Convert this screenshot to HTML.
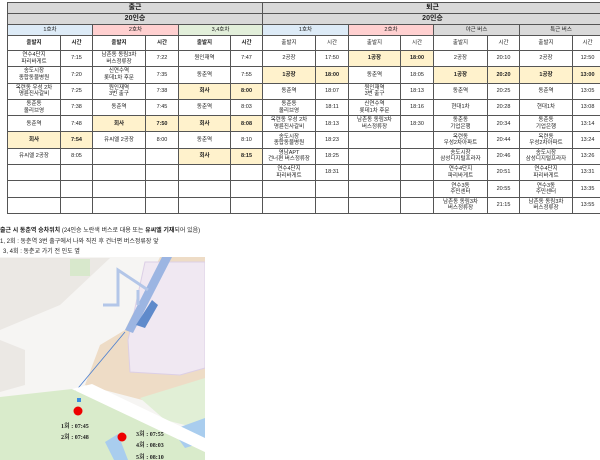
<!DOCTYPE html>
<html><head><meta charset="utf-8">
<style>
*{margin:0;padding:0;box-sizing:border-box}
body{width:600px;height:460px;background:#fff;position:relative;overflow:hidden;font-family:"Liberation Sans","Noto Sans CJK KR",sans-serif;color:#222}
table{position:absolute;border-collapse:collapse;table-layout:fixed;font-size:5.5px;line-height:6.5px}
td{border:1px solid #555;text-align:center;vertical-align:middle;overflow:hidden;white-space:nowrap;padding:0}
.g{background:#d9d9d9;font-weight:bold;font-size:7px}
.b{background:#ddebf7}.p{background:#ffd0d0}.gr{background:#e2efda}.gy{background:#d9d9d9}
.y{background:#fff2cc;font-weight:bold}
.h td{font-weight:bold}
.t{position:absolute;left:0;font-size:6px;line-height:7px;white-space:nowrap}
</style></head><body>
<table style="left:7px;top:2px;width:255px">
<colgroup><col style="width:53px"><col style="width:32px"><col style="width:53px"><col style="width:33px"><col style="width:52px"><col style="width:32px"></colgroup>
<tr style="height:11px"><td colspan="6" class="g">출근</td></tr>
<tr style="height:11px"><td colspan="6" class="g">20인승</td></tr>
<tr style="height:11px"><td colspan="2" class="b">1호차</td><td colspan="2" class="p">2호차</td><td colspan="2" class="gr">3,4호차</td></tr>
<tr class="h" style="height:15px"><td>출발지</td><td>시간</td><td>출발지</td><td>시간</td><td>출발지</td><td>시간</td></tr>
<tr style="height:16.3px"><td>연수4단지<br>파리바게트</td><td>7:15</td><td>남촌동 동림3차<br>버스정류장</td><td>7:22</td><td>원인재역</td><td>7:47</td></tr>
<tr style="height:16.3px"><td>송도시장<br>종합동물병원</td><td>7:20</td><td>신연수역<br>롯데1차 후문</td><td>7:35</td><td>동춘역</td><td>7:55</td></tr>
<tr style="height:16.3px"><td>옥련동 우성 2차<br>명륜진사갈비</td><td>7:25</td><td>원인재역<br>3번 출구</td><td>7:38</td><td class="y">회사</td><td class="y">8:00</td></tr>
<tr style="height:16.3px"><td>동춘동<br>올리브영</td><td>7:38</td><td>동춘역</td><td>7:45</td><td>동춘역</td><td>8:03</td></tr>
<tr style="height:16.3px"><td>동춘역</td><td>7:48</td><td class="y">회사</td><td class="y">7:50</td><td class="y">회사</td><td class="y">8:08</td></tr>
<tr style="height:16.3px"><td class="y">회사</td><td class="y">7:54</td><td>유씨엘 2공장</td><td>8:00</td><td>동춘역</td><td>8:10</td></tr>
<tr style="height:16.3px"><td>유씨엘 2공장</td><td>8:05</td><td></td><td></td><td class="y">회사</td><td class="y">8:15</td></tr>
<tr style="height:16.3px"><td></td><td></td><td></td><td></td><td></td><td></td></tr>
<tr style="height:16.3px"><td></td><td></td><td></td><td></td><td></td><td></td></tr>
<tr style="height:16.3px"><td></td><td></td><td></td><td></td><td></td><td></td></tr>
</table>
<table style="left:262px;top:2px;width:340px">
<colgroup><col style="width:53px"><col style="width:33px"><col style="width:52px"><col style="width:33px"><col style="width:54px"><col style="width:32px"><col style="width:53px"><col style="width:30px"></colgroup>
<tr style="height:11px"><td colspan="8" class="g">퇴근</td></tr>
<tr style="height:11px"><td colspan="8" class="g">20인승</td></tr>
<tr style="height:11px"><td colspan="2" class="b">1호차</td><td colspan="2" class="p">2호차</td><td colspan="2" class="gy">야근 버스</td><td colspan="2" class="gy">특근 버스</td></tr>
<tr style="height:15px"><td>출발지</td><td>시간</td><td>출발지</td><td>시간</td><td>출발지</td><td>시간</td><td>출발지</td><td>시간</td></tr>
<tr style="height:16.3px"><td>2공장</td><td>17:50</td><td class="y">1공장</td><td class="y">18:00</td><td>2공장</td><td>20:10</td><td>2공장</td><td>12:50</td></tr>
<tr style="height:16.3px"><td class="y">1공장</td><td class="y">18:00</td><td>동춘역</td><td>18:05</td><td class="y">1공장</td><td class="y">20:20</td><td class="y">1공장</td><td class="y">13:00</td></tr>
<tr style="height:16.3px"><td>동춘역</td><td>18:07</td><td>원인재역<br>3번 출구</td><td>18:13</td><td>동춘역</td><td>20:25</td><td>동춘역</td><td>13:05</td></tr>
<tr style="height:16.3px"><td>동춘동<br>올리브영</td><td>18:11</td><td>신연수역<br>롯데1차 후문</td><td>18:16</td><td>현대1차</td><td>20:28</td><td>현대1차</td><td>13:08</td></tr>
<tr style="height:16.3px"><td>옥련동 우성 2차<br>명륜진사갈비</td><td>18:13</td><td>남촌동 동림3차<br>버스정류장</td><td>18:30</td><td>동춘동<br>기업은행</td><td>20:34</td><td>동춘동<br>기업은행</td><td>13:14</td></tr>
<tr style="height:16.3px"><td>송도시장<br>종합동물병원</td><td>18:23</td><td></td><td></td><td>옥련동<br>우성2차아파트</td><td>20:44</td><td>옥련동<br>우성2차아파트</td><td>13:24</td></tr>
<tr style="height:16.3px"><td>영남APT<br>건너편 버스정류장</td><td>18:25</td><td></td><td></td><td>송도시장<br>삼성디지털프라자</td><td>20:46</td><td>송도시장<br>삼성디지털프라자</td><td>13:26</td></tr>
<tr style="height:16.3px"><td>연수4단지<br>파리바게트</td><td>18:31</td><td></td><td></td><td>연수4단지<br>파리바게트</td><td>20:51</td><td>연수4단지<br>파리바게트</td><td>13:31</td></tr>
<tr style="height:16.3px"><td></td><td></td><td></td><td></td><td>연수3동<br>주민센터</td><td>20:55</td><td>연수3동<br>주민센터</td><td>13:35</td></tr>
<tr style="height:16.3px"><td></td><td></td><td></td><td></td><td>남촌동 동림3차<br>버스정류장</td><td>21:15</td><td>남촌동 동림3차<br>버스정류장</td><td>13:55</td></tr>
</table>
<div class="t" style="top:228px"><b>출근 시 동춘역 승차위치</b> (24인승 노란색 버스로 대용 또는 <b>유씨엘 기재</b>되어 있음)</div>
<div class="t" style="top:239px">1, 2회 : 동춘역 3번 출구에서 나와 직진 후 건너편 버스정류장 앞</div>
<div class="t" style="top:249px;left:3px">3, 4회 : 동춘교 가기 전 인도 옆</div>
<svg style="position:absolute;left:0;top:257px" width="205" height="203" viewBox="0 257 205 203">
<rect x="0" y="257" width="205" height="203" fill="#f6f5f3"/>
<polygon points="0,258 110,258 60,305 0,330" fill="#ebe8e4"/>
<rect x="70" y="259" width="20" height="17" fill="#d8e8cc"/>
<polygon points="0,340 25,350 25,385 0,392" fill="#ebe8e4"/>
<polygon points="160,257 205,257 205,405 150,402 85,385 100,345 125,330" fill="#eedcc6"/>
<polygon points="145,262 205,262 205,368 180,375 130,372 128,340" fill="#f0e8f2" stroke="#dccfe6" stroke-width="1"/>
<polygon points="172,257 162,257 125,330 133,333" fill="#9cb5e2"/>
<polygon points="152,300 136,325 145,328 158,305" fill="#5f8acb"/>
<path d="M103,305 L118,305 L118,270 L148,290" stroke="#b3c6e8" stroke-width="3" fill="none"/>
<path d="M138,290 L138,305" stroke="#b3c6e8" stroke-width="3" fill="none"/>
<line x1="125" y1="332" x2="18" y2="460" stroke="#4a7fd0" stroke-width="0.8"/>
<polygon points="0,397 72,389 205,452 205,460 0,460" fill="#d9ebcb"/>
<polygon points="140,398 205,378 205,430 165,420" fill="#e1efd6"/>
<polygon points="172,430 205,418 205,442 185,448" fill="#a9cdee"/>
<polygon points="105,442 118,434 128,460 114,460" fill="#a9cdee"/>
<polygon points="72,389 92,384 205,438 205,452" fill="#fff"/>
<circle cx="78" cy="411" r="4.5" fill="#e00"/>
<circle cx="122" cy="437" r="4.5" fill="#e00"/>
<rect x="77" y="398" width="4" height="4" fill="#3a8be0"/>
<g font-family="Liberation Serif,Noto Serif CJK SC,serif" font-size="6" font-weight="bold" fill="#222">
<text x="61" y="428">1회 : 07:45</text>
<text x="61" y="439">2회 : 07:48</text>
<text x="136" y="436">3회 : 07:55</text>
<text x="136" y="447">4회 : 08:03</text>
<text x="136" y="459">5회 : 08:10</text>
</g>
</svg>
</body></html>
